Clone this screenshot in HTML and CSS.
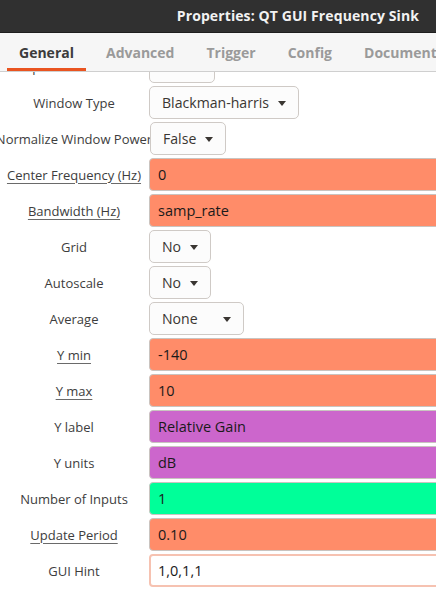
FILE: index.html
```html
<!DOCTYPE html>
<html>
<head>
<meta charset="utf-8">
<link rel="stylesheet" href="styles.css">
</head>
<body>
<div class="window">
  <header class="titlebar"><span class="title">Properties: QT GUI Frequency Sink</span></header>
  <nav class="tabs">
    <div class="tab active">General</div>
    <div class="tab">Advanced</div>
    <div class="tab">Trigger</div>
    <div class="tab">Config</div>
    <div class="tab">Documentation</div>
  </nav>
  <main class="viewport">
    <div class="form">
      <div class="label">Spectrum Width</div>
      <div class="combo"><span>Full</span><i class="arrow"></i></div>

      <div class="label">Window Type</div>
      <div class="combo"><span>Blackman-harris</span><i class="arrow"></i></div>

      <div class="label">Normalize Window Power</div>
      <div class="combo combo-shift"><span>False</span><i class="arrow"></i></div>

      <div class="label"><u>Center Frequency (Hz)</u></div>
      <div class="entry float">0</div>

      <div class="label"><u>Bandwidth (Hz)</u></div>
      <div class="entry float">samp_rate</div>

      <div class="label">Grid</div>
      <div class="combo"><span>No</span><i class="arrow"></i></div>

      <div class="label">Autoscale</div>
      <div class="combo"><span>No</span><i class="arrow"></i></div>

      <div class="label">Average</div>
      <div class="combo combo-wide"><span>None</span><i class="arrow"></i></div>

      <div class="label"><u>Y min</u></div>
      <div class="entry float">-140</div>

      <div class="label"><u>Y max</u></div>
      <div class="entry float">10</div>

      <div class="label">Y label</div>
      <div class="entry string">Relative Gain</div>

      <div class="label">Y units</div>
      <div class="entry string">dB</div>

      <div class="label">Number of Inputs</div>
      <div class="entry int">1</div>

      <div class="label"><u>Update Period</u></div>
      <div class="entry float">0.10</div>

      <div class="label">GUI Hint</div>
      <div class="entry hint">1,0,1,1</div>
    </div>
  </main>
</div>
</body>
</html>
```
FILE: styles.css
```css
* { box-sizing: border-box; }
html, body { margin: 0; padding: 0; }
body {
  width: 436px;
  height: 589px;
  overflow: hidden;
  background: #ffffff;
  font-family: "Open Sans", "Noto Sans", "DejaVu Sans", sans-serif;
}
.window {
  display: flex;
  flex-direction: column;
  height: 589px;
}
.titlebar {
  height: 33px;
  flex: none;
  background: #303030;
  border-bottom: 1px solid #1e1e1e;
  display: flex;
  align-items: center;
  justify-content: flex-end;
  padding: 0 17px 1px 0;
}
.title {
  color: #f2f2f2;
  font-weight: 700;
  font-size: 14px;
  letter-spacing: 0.1px;
}
.tabs {
  height: 39px;
  flex: none;
  background: #f6f6f6;
  border-bottom: 1px solid #cfcfcf;
  display: flex;
  gap: 8px;
  padding-left: 7px;
  overflow: hidden;
  white-space: nowrap;
}
.tab {
  padding: 4px 12px 0;
  display: flex;
  align-items: center;
  font-size: 14px;
  font-weight: 700;
  color: #9a9a9a;
  border-bottom: 3px solid transparent;
}
.tab.active {
  color: #3c3c3c;
  border-bottom-color: #e95420;
}
.viewport {
  flex: 1;
  overflow: hidden;
}
.form {
  display: grid;
  grid-template-columns: 148px 1fr;
  grid-auto-rows: 33px;
  row-gap: 3px;
  column-gap: 1px;
  margin-top: -22px;
}
.label {
  display: flex;
  align-items: center;
  justify-content: center;
  white-space: nowrap;
  font-size: 13px;
  color: #3d3d3d;
}
.label u {
  text-decoration-color: #6a6a6a;
  text-underline-offset: 3px;
}
.combo {
  justify-self: start;
  display: inline-flex;
  align-items: center;
  justify-content: space-between;
  gap: 9px;
  height: 33px;
  padding: 0 12px 0 12px;
  border: 1px solid #cfcac6;
  border-radius: 5px;
  background: #fcfcfc;
  font-size: 14.1px;
  color: #3a3632;
  white-space: nowrap;
}
.combo-shift { margin-left: 1px; }
.combo-wide { min-width: 95px; }
.arrow {
  display: block;
  width: 0;
  height: 0;
  border-left: 4.5px solid transparent;
  border-right: 4.5px solid transparent;
  border-top: 5px solid #3a3632;
  margin-top: 1px;
}
.entry {
  width: 320px;
  height: 33px;
  display: flex;
  align-items: center;
  padding-left: 8px;
  border: 1px solid #c9c4c0;
  border-radius: 4px;
  font-size: 14.5px;
  color: #1a1a1a;
  white-space: nowrap;
}
.float { background: #ff8c69; }
.string { background: #cc66cc; }
.int { background: #00ff99; }
.hint {
  background: #ffffff;
  border: 2px solid #f6c2b1;
  padding-left: 7px;
}
```
